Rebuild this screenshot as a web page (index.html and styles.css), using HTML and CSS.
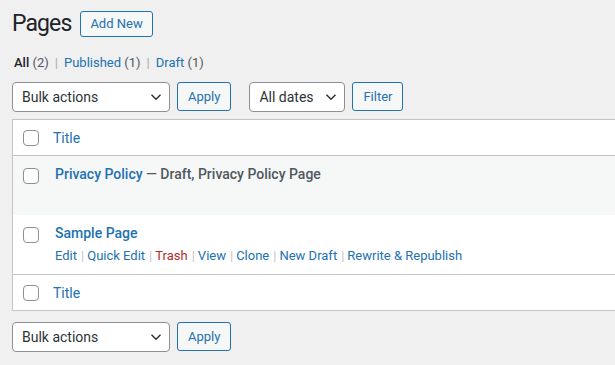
FILE: index.html
```html
<!DOCTYPE html>
<html>
<head>
    <link rel="stylesheet" href="styles.css">
</head>
<body>

<div class="wrap">
    <!--tiêu đề trang-->
    <div class="head">
        <h1>Pages</h1>
        <a class="add-new" href="#">Add New</a>
    </div>

    <ul class="subsubsub">
        <li class="current">All <span class="count">(2)</span></li>
        <li class="sep">|</li>
        <li><a href="#">Published <span class="count">(1)</span></a></li>
        <li class="sep">|</li>
        <li><a href="#">Draft <span class="count">(1)</span></a></li>
    </ul>

    <div class="tablenav top">
        <div class="select bulk">Bulk actions
            <svg viewBox="0 0 12 8" width="12" height="8"><path d="M1.5 1.8 6 6.2l4.5-4.4" fill="none" stroke="#2c3338" stroke-width="1.5"/></svg>
        </div>
        <button class="btn">Apply</button>
        <div class="select dates">All dates
            <svg viewBox="0 0 12 8" width="12" height="8"><path d="M1.5 1.8 6 6.2l4.5-4.4" fill="none" stroke="#2c3338" stroke-width="1.5"/></svg>
        </div>
        <button class="btn">Filter</button>
    </div>

    <!--danh sách trang-->
    <div class="list">
        <div class="row head-row">
            <span class="cb"></span>
            <a class="col-title" href="#">Title</a>
        </div>
        <div class="row item alt">
            <span class="cb"></span>
            <div class="cell">
                <div><a class="title" href="#">Privacy Policy</a><span class="state"> — Draft, Privacy Policy Page</span></div>
            </div>
        </div>
        <div class="row item">
            <span class="cb"></span>
            <div class="cell">
                <div><a class="title" href="#">Sample Page</a></div>
                <div class="actions">
                    <a href="#">Edit</a><i>|</i><a href="#">Quick Edit</a><i>|</i><a class="trash" href="#">Trash</a><i>|</i><a href="#">View</a><i>|</i><a href="#">Clone</a><i>|</i><a href="#">New Draft</a><i>|</i><a href="#">Rewrite &amp; Republish</a>
                </div>
            </div>
        </div>
        <div class="row foot-row">
            <span class="cb"></span>
            <a class="col-title" href="#">Title</a>
        </div>
    </div>

    <div class="tablenav bottom">
        <div class="select bulk">Bulk actions
            <svg viewBox="0 0 12 8" width="12" height="8"><path d="M1.5 1.8 6 6.2l4.5-4.4" fill="none" stroke="#2c3338" stroke-width="1.5"/></svg>
        </div>
        <button class="btn">Apply</button>
    </div>
</div>

</body>
</html>
```
FILE: styles.css
```css
body{
    margin: 0;
    background-color: #f0f0f1;
    font-family: Roboto, "Liberation Sans", sans-serif;
    font-size: 13px;
    color: #3c434a;
    overflow: hidden;
}
a{
    color: #2271b1;
    text-decoration: none;
}
.wrap{
    padding-left: 12px;
    width: 640px;
}
.head{
    display: flex;
    align-items: center;
    gap: 9px;
    padding-top: 11px;
}
h1{
    margin: 0;
    font-size: 23px;
    font-weight: 400;
    line-height: 26px;
    letter-spacing: -0.9px;
    color: #1d2327;
}
.add-new{
    border: 1px solid #2271b1;
    border-radius: 3px;
    background-color: #f6f7f7;
    height: 24px;
    line-height: 24px;
    padding: 0 9px;
    font-size: 13px;
}
.subsubsub{
    list-style: none;
    margin: 17px 0 0 2px;
    padding: 0;
    display: flex;
    gap: 6px;
    line-height: 18px;
}
.subsubsub .current{
    color: #1d2327;
    font-weight: 500;
}
.count{
    color: #50575e;
    font-weight: 400;
}
.sep{
    color: #a7aaad;
}
.tablenav{
    display: flex;
    align-items: center;
    height: 30px;
}
.tablenav.top{
    margin-top: 10px;
}
.tablenav.bottom{
    margin-top: 11px;
}
.select{
    box-sizing: border-box;
    display: flex;
    align-items: center;
    justify-content: space-between;
    height: 30px;
    border: 1px solid #8c8f94;
    border-radius: 4px;
    background-color: #fff;
    padding: 0 7px 0 9px;
    font-size: 14px;
    color: #2c3338;
}
.bulk{
    width: 158px;
}
.dates{
    width: 96px;
    margin-left: 18px;
}
.btn{
    box-sizing: border-box;
    height: 29px;
    margin-left: 7px;
    border: 1px solid #2271b1;
    border-radius: 3px;
    background-color: #f6f7f7;
    color: #2271b1;
    font-family: inherit;
    font-size: 13px;
    padding: 0 10px;
    align-self: flex-start;
}
.list{
    margin-top: 7px;
    border: 1px solid #c3c4c7;
    background-color: #fff;
}
.row{
    display: flex;
    align-items: flex-start;
}
.cb{
    box-sizing: border-box;
    width: 16px;
    height: 16px;
    border: 1px solid #8c8f94;
    border-radius: 4px;
    background-color: #fff;
    margin-left: 10px;
    flex-shrink: 0;
}
.head-row,
.foot-row{
    height: 35px;
    align-items: center;
}
.head-row{
    border-bottom: 1px solid #c3c4c7;
}
.foot-row{
    border-top: 1px solid #c3c4c7;
}
.col-title{
    margin-left: 14px;
    font-size: 14px;
}
.item{
    height: 59px;
    padding-top: 10px;
    box-sizing: border-box;
}
.item .cb{
    margin-top: 2px;
}
.alt{
    background-color: #f6f7f7;
}
.cell{
    margin-left: 16px;
    font-size: 14px;
    line-height: 17px;
}
.title{
    font-weight: 500;
    color: #2271b1;
}
.state{
    color: #50575e;
    font-weight: 500;
}
.actions{
    margin-top: 5px;
    font-size: 13px;
}
.actions i{
    font-style: normal;
    color: #c3c4c7;
    margin: 0 3px 0 4px;
}
.trash{
    color: #b32d2e;
}
```
